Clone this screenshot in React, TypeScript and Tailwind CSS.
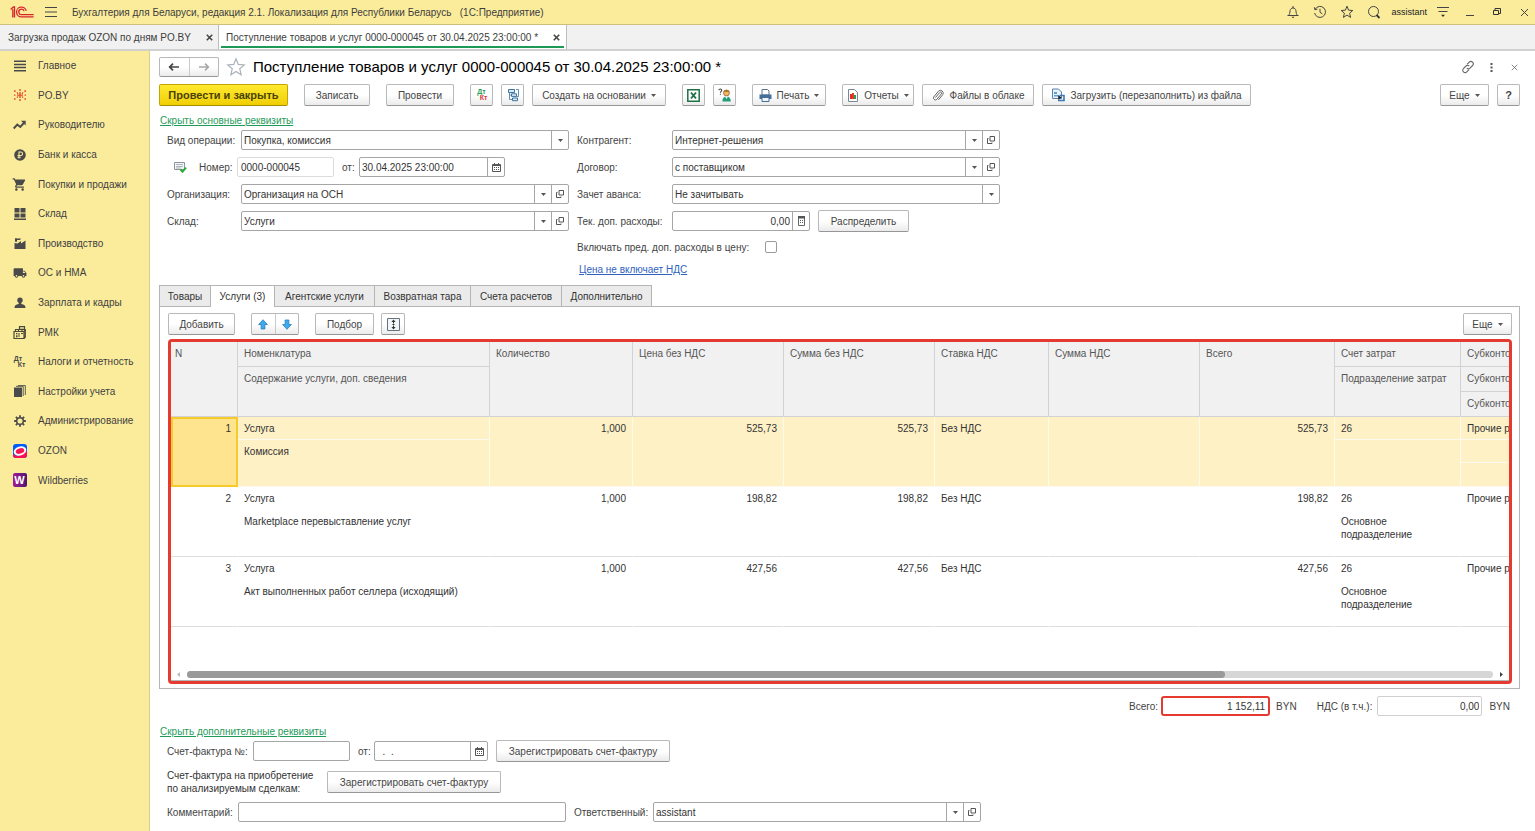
import React from 'react';
import type { ReactNode } from 'react';
import { MdLocalShipping, MdPerson, MdShoppingCart } from 'react-icons/md';

/* ---------- icons ---------- */

const Svg = ({ w = 16, h = 16, box, children, className = '' }: { w?: number; h?: number; box?: string; children: ReactNode; className?: string }) => (
  <svg width={w} height={h} viewBox={box ?? `0 0 ${w} ${h}`} fill="none" aria-hidden="true" className={`shrink-0 ${className}`}>
    {children}
  </svg>
);

const Logo = () => (
  <Svg w={24} h={14}>
    <g stroke="#d8232a" strokeWidth="1.3">
      <path d="M.6 4.4 3.4 2h1.1v10.6M2.8 4.2v8.4" />
      <path d="M16.2 5.8A4.9 4.9 0 1 0 12 11.9h11.6" />
      <path d="M14 6A2.7 2.7 0 1 0 12 9.6h11.6" />
    </g>
  </Svg>
);

const Bars = () => (
  <Svg w={12} h={12}>
    <path d="M0 1.5h12M0 6h12M0 10.5h12" stroke="#444" />
  </Svg>
);

const Bell = () => (
  <Svg w={14} h={14}>
    <path d="M1.500 10.500h11M2.500 10.300C4 9 3.700 7.800 4.100 5.600 4.400 3.800 5.600 3 7 3s2.600.8 2.900 2.600c.4 2.200.1 3.400 1.600 4.700M7 1v2" stroke="#444" />
    <path d="M5.400 11.800h3.200L7 13.200z" fill="#444" />
  </Svg>
);

const History = () => (
  <Svg w={14} h={14}>
    <path d="M2.200 4.200A5.500 5.500 0 1 1 1.600 8M1.300 2.200l.6 2.500 2.500-.5M7 3.800V7.300l2.400 1.600" stroke="#444" />
  </Svg>
);

const Star = ({ size = 14, color = '#444' }: { size?: number; color?: string }) => (
  <Svg w={size} h={size} box="0 0 14 14">
    <path d="M7 1.200 8.600 5.200l4.200.3-3.200 2.700 1 4.200L7 10.100l-3.600 2.300 1-4.200L1.200 5.500l4.200-.3z" stroke={color} strokeWidth={size > 14 ? 0.8 : 1} />
  </Svg>
);

const Search = () => (
  <Svg w={14} h={14}>
    <circle cx="6.500" cy="6.500" r="5" stroke="#444" />
    <path d="m9.500 10 3 3" stroke="#333" strokeWidth="1.800" />
  </Svg>
);

const Filter = () => (
  <Svg w={12} h={12}>
    <path d="M0 1.500h12M1.500 5.500h9" stroke="#444" strokeWidth="1.200" />
    <path d="M4 8.800h4L6 11z" fill="#333" />
  </Svg>
);

const Cross = ({ size = 9, width = 1, color = '#444' }: { size?: number; width?: number; color?: string }) => (
  <Svg w={size} h={size} box="0 0 9 9">
    <path d="m1 1 7 7M8 1 1 8" stroke={color} strokeWidth={width} />
  </Svg>
);

const LinkIcon = () => (
  <Svg w={14} h={14}>
    <g stroke="#666" strokeWidth="1.100">
      <path d="M6 4.400 8.200 2.200a2.300 2.300 0 0 1 3.400 3.300L9 8.100a2.300 2.300 0 0 1-3.200 0" />
      <path d="M8 9.700 5.800 11.900a2.300 2.300 0 0 1-3.400-3.300L5 6a2.300 2.300 0 0 1 3.200 0" />
    </g>
  </Svg>
);

const Caret = () => (
  <Svg w={5} h={3}>
    <path d="M0 0h5L2.500 3z" fill="#555" />
  </Svg>
);

const OpenIcon = () => (
  <Svg w={8} h={8}>
    <path d="M3 .5h4.500V5H3zM1.500 2.500h-1v5H5v-1" stroke="#555" />
  </Svg>
);

const CalendarIcon = () => (
  <Svg w={9} h={9}>
    <path d="M.5 1.500h8v7h-8z" stroke="#555" />
    <path d="M1 1h7v2H1zM2 0h1v2H2zM6 0h1v2H6zM2 4h1v1H2zM4 4h1v1H4zM6 4h1v1H6zM2 6h1v1H2zM4 6h1v1H4zM6 6h1v1H6z" fill="#555" />
  </Svg>
);

const CalcIcon = () => (
  <Svg w={9} h={10}>
    <path d="M1.500.5h6v9h-6z" stroke="#666" />
    <path d="M1 0h7v2.500H1zM3 4h1v1H3zM5 4h1v1H5zM3 6h1v1H3zM5 6h1v1H5z" fill="#555" />
  </Svg>
);

const Arrow = ({ flip = false, color = '#444' }: { flip?: boolean; color?: string }) => (
  <Svg w={12} h={10} className={flip ? 'rotate-180' : ''}>
    <path d="M1 5h10M5 1.700 1.700 5 5 8.300" stroke={color} strokeWidth="1.700" />
  </Svg>
);

const BlueArrow = ({ down = false }: { down?: boolean }) => (
  <Svg w={10} h={11} className={down ? 'rotate-180' : ''}>
    <path d="M5 .7 9.400 5.500H6.900v4.500H3.100V5.500H.6z" fill="#3fa9ee" stroke="#2a7fbd" strokeWidth=".8" />
  </Svg>
);

const StructureIcon = () => (
  <Svg w={14} h={14}>
    <g stroke="#3f739f">
      <path d="M2.500 1.500h6v3h-6zM5.500 5.800h5v2.600h-5zM6.500 10h5v2.700h-5z" fill="#dceaf6" />
      <path d="M3.500 4.500v7h3M3.500 7h2M10 1.500h2.500v7h-2" strokeWidth=".8" />
    </g>
  </Svg>
);

const ExcelIcon = () => (
  <Svg w={13} h={13}>
    <path d="M.8.800h11.400v11.400H.8z" stroke="#1d7145" strokeWidth="1.500" fill="#fff" />
    <path d="m4 3.500 5 6M9 3.500l-5 6" stroke="#1d7145" strokeWidth="1.900" />
  </Svg>
);

const PersonQuestion = () => (
  <Svg w={14} h={14}>
    <circle cx="8.500" cy="5" r="2.900" fill="#f4b76a" stroke="#8f6125" strokeWidth=".8" />
    <path d="M4.400 13.500c0-3.500 1.600-5 4.100-5s4.300 1.500 4.300 5z" fill="#239c77" />
    <path d="m7 8.500 1.500 2.500L10 8.500z" fill="#fff" />
    <path d="M.8 2.200C1 .6 3.800.600 3.700 2.300 3.600 3.400 2.400 3.300 2.400 4.800M2.400 5.800v1" stroke="#444" strokeWidth="1.100" />
    <path d="M5.500 4C6 1.200 10.800 1 11.500 4z" fill="#ad762f" />
  </Svg>
);

const Printer = () => (
  <Svg w={13} h={13}>
    <path d="M3 .500h5.500L10 2v4H3z" fill="#fff" stroke="#5c7288" />
    <path d="M.5 5.500h12V10H.5z" fill="#456f98" />
    <path d="M3 8.500h7v4H3z" fill="#eef4fa" stroke="#456f98" />
  </Svg>
);

const Report = () => (
  <Svg w={12} h={13}>
    <path d="M1.500.5h6l3 3v9h-9z" fill="#fff" stroke="#7c8791" />
    <path d="M3 5h2v5H3z" fill="#e02b2b" />
    <path d="M5 4h2v6H5z" fill="#e23b2e" />
    <path d="M7 6h2v4H7z" fill="#2e9e49" />
  </Svg>
);

const Clip = () => (
  <Svg w={12} h={13}>
    <path d="m3.500 8.500 4.200-5a1 1 0 0 1 1.700 1.300L4.700 10.500a2 2 0 0 1-3-2.500L6.500 2.100a2.800 2.800 0 0 1 4.300 3.500L6.500 10.800" stroke="#666" strokeWidth="1" />
  </Svg>
);

const LoadFile = () => (
  <Svg w={14} h={14}>
    <path d="M1.500 1h6l3 3v6.500h-9z" fill="#eaf3fb" stroke="#5b82a8" />
    <path d="M3 4h3v2H3zM3 7h4v1.500H3z" fill="#58a0d2" />
    <path d="M8.500 7.500h4.500v5H7" stroke="#3c7ab5" strokeWidth="1.600" />
    <path d="m7 7 3.500 2.500L7.500 12z" fill="#222" />
  </Svg>
);

const ExpandIcon = () => (
  <Svg w={13} h={13}>
    <path d="M.5.500h12v12H.5z" fill="#f3f6f8" stroke="#66727c" />
    <path d="M6.500 2v3.500M6.500 7.500V11" stroke="#333" />
    <path d="M6.500 1.500 8.600 4H4.400zM6.500 11.500 8.600 9H4.400zM5.500 6h2v1h-2z" fill="#333" />
  </Svg>
);

const PostedIcon = () => (
  <Svg w={13} h={12}>
    <path d="M.5 1.500h10v7H.5z" fill="#f3f6f9" stroke="#8a94a0" />
    <path d="M2 3.500h7M2 5.500h7M2 7h5" stroke="#9aa5b0" strokeWidth=".8" />
    <path d="m6.500 8.500 2 2.200 3.500-4" stroke="#2faa3c" strokeWidth="2" />
  </Svg>
);

const DtKt = ({ dt, kt }: { dt: string; kt: string }) => (
  <span className="flex flex-col text-[7px] leading-[6px] font-bold" aria-hidden="true">
    <span className={dt}>Дт</span>
    <span className={`pl-1 ${kt}`}>Кт</span>
  </span>
);

const icons: Record<string, ReactNode> = {
  main: (
    <Svg w={12} h={12}>
      <path d="M0 1.200h12M0 4.400h12M0 7.600h12M0 10.800h12" stroke="#4a4a4a" strokeWidth="1.500" />
    </Svg>
  ),
  poby: (
    <Svg w={12} h={12}>
      <g fill="#e4522b">
        <path d="M5.300 0h1.400v2H5.300zM5.300 3h1.400v6H5.300zM5.300 10h1.400v2H5.300zM0 1.300h1.600v1.600H0zM2.500 3.500l1-.4 1 1.300-1 .8zM0 5.400h1.500v1.300H0zM3 5.400h6v1.300H3zM10.500 5.400H12v1.300h-1.500zM10.400 1.300H12v1.600h-1.600zM7.500 4.400l1-1.300 1 .4-1 1.700zM0 9.200h1.600v1.500H0zM2.500 8.500l1-1.600 1 .8-1 1.200zM10.400 9.200H12v1.500h-1.600zM7.500 7.700l1-.8 1 1.600-1 .4z" />
      </g>
    </Svg>
  ),
  lead: (
    <Svg w={13} h={10}>
      <path d="m.7 8.500 3.600-4 3 2.500 4-4.500" stroke="#4a4a4a" strokeWidth="1.900" />
      <path d="M8 .8h4.700v4.700z" fill="#4a4a4a" />
    </Svg>
  ),
  bank: (
    <Svg w={12} h={12}>
      <circle cx="6" cy="6" r="5.800" fill="#4a4a4a" />
      <path d="M5 9.600V3h1.800a1.700 1.700 0 0 1 0 3.500H3.500M3.500 8.200h3.300" stroke="#fbec9c" strokeWidth="1.100" />
    </Svg>
  ),
  buy: <MdShoppingCart size={15} />,
  stock: (
    <Svg w={12} h={12}>
      <path d="M.5 0h5v4.500h-5zM6.500 0h5v4.500h-5zM.5 5.500h5v4h-5zM6.500 5.500h5v4h-5zM0 10.500h12V12H0z" fill="#4a4a4a" />
    </Svg>
  ),
  factory: (
    <Svg w={12} h={12}>
      <path d="M.5 12V6l3 .5L7 4v2.500L11.500 3.500V12z" fill="#4a4a4a" />
      <path d="M1 1.200h2v3.500H1zM3 2c1-2 2 .5 3.500-1v1.500C5 4 4 2 3 3.500z" fill="#4a4a4a" />
    </Svg>
  ),
  assets: <MdLocalShipping size={14} />,
  staff: (
    <Svg w={12} h={12}>
      <circle cx="6" cy="3.200" r="2.700" fill="#4a4a4a" />
      <path d="M4.700 5h2.600v2c3 .3 4.200 1.500 4.200 4H.5c0-2.500 1.200-3.700 4.200-4z" fill="#4a4a4a" />
    </Svg>
  ),
  rmk: (
    <Svg w={13} h={13}>
      <path d="M1 5.500h10v7H1zM2.500 5.500v-2h3v2M6.500.7h5v2.600h-5zM9 3.500v2M11 5.500 12.300 3v8L11 12.500" stroke="#4a4a3a" strokeWidth="1.200" />
      <path d="M3 7h1.500v1.200H3zM3 9.200h1.500v2H3zM5.500 7h1v4h-1zM8 7h2v1H8z" fill="#4a4a3a" />
    </Svg>
  ),
  tax: <DtKt dt="text-[#4a4a4a]" kt="text-[#4a4a4a]" />,
  setup: (
    <Svg w={12} h={12}>
      <path d="M0 2.500h8V12H0z" fill="#4a4a4a" />
      <path d="M2 1.300h7.200V11M4 .4h7.300V10" stroke="#4a4a4a" strokeWidth=".9" />
    </Svg>
  ),
  admin: (
    <Svg w={12} h={12}>
      <circle cx="6" cy="6" r="3.300" stroke="#4a4a4a" strokeWidth="1.500" />
      <path d="M6 .2v2M6 9.800v2M.2 6h2M9.800 6h2M1.900 1.900l1.400 1.400M8.700 8.700l1.400 1.400M1.900 10.100l1.400-1.400M8.700 3.300l1.400-1.400" stroke="#4a4a4a" strokeWidth="1.800" />
    </Svg>
  ),
  ozon: (
    <Svg w={14} h={14}>
      <rect width="14" height="14" rx="3" fill="#005bff" />
      <path d="M0 9.500C3 14 9 11 14 7v4a3 3 0 0 1-3 3H3a3 3 0 0 1-3-3z" fill="#f91155" />
      <ellipse cx="7" cy="7" rx="5.400" ry="3.600" transform="rotate(-18 7 7)" fill="#f91155" stroke="#fff" strokeWidth="2" />
    </Svg>
  ),
  wb: (
    <span className="flex size-3.5 items-center justify-center rounded-[2px] bg-linear-to-r from-[#a8149b] to-[#4a1570] text-[11px] leading-none font-bold text-white" aria-hidden="true">
      W
    </span>
  ),
};

/* ---------- controls ---------- */

const Btn = ({ children, className = '', label, primary = false }: { children: ReactNode; className?: string; label?: string; primary?: boolean }) => (
  <button
    type="button"
    aria-label={label}
    className={`flex h-[22px] shrink-0 items-center justify-center rounded-[2px] border whitespace-nowrap ${
      primary
        ? 'border-[#c3a600] border-b-[#a58c00] bg-linear-to-b from-[#ffe92e] to-[#f0cf00] text-[11px] font-bold text-[#4a4300]'
        : 'border-[#b9b9b9] border-b-[#969696] bg-linear-to-b from-white from-50% to-[#ebebeb] text-[#444]'
    } ${className}`}
  >
    {children}
  </button>
);

const boxCls = 'flex h-5 shrink-0 overflow-hidden rounded-[2px] border border-[#a6a6a6] bg-white text-[#333]';
const sideCls = 'flex w-[17px] shrink-0 items-center justify-center border-l border-[#a6a6a6]';

const Combo = ({ id, value, width, open = false }: { id: string; value: string; width: string; open?: boolean }) => (
  <div className={`${boxCls} ${width}`}>
    <div className="grid min-w-0 flex-1">
      <select id={id} className="col-start-1 row-start-1 w-full appearance-none bg-transparent pr-5 pl-[2px] outline-none" defaultValue={value}>
        <option>{value}</option>
      </select>
      <span className={`pointer-events-none col-start-1 row-start-1 justify-self-end ${sideCls}`}>
        <Caret />
      </span>
    </div>
    {open && (
      <button type="button" aria-label="Открыть" className={sideCls}>
        <OpenIcon />
      </button>
    )}
  </div>
);

const Field = ({ id, value = '', width, right = false, label, icon }: { id: string; value?: string; width: string; right?: boolean; label?: string; icon?: ReactNode }) => (
  <div className={`${boxCls} ${width}`}>
    <input id={id} defaultValue={value} className={`min-w-0 flex-1 px-[2px] whitespace-pre outline-none ${right ? 'text-right' : ''}`} />
    {icon && (
      <button type="button" aria-label={label} className={sideCls}>
        {icon}
      </button>
    )}
  </div>
);

const Row = ({ id, label, children }: { id: string; label: string; children: ReactNode }) => (
  <div className="flex h-5 items-center">
    <label htmlFor={id} className="w-[95px] shrink-0 whitespace-nowrap">
      {label}
    </label>
    {children}
  </div>
);

/* ---------- data ---------- */

const menu = [
  ['main', 'Главное'],
  ['poby', 'PO.BY'],
  ['lead', 'Руководителю'],
  ['bank', 'Банк и касса'],
  ['buy', 'Покупки и продажи'],
  ['stock', 'Склад'],
  ['factory', 'Производство'],
  ['assets', 'ОС и НМА'],
  ['staff', 'Зарплата и кадры'],
  ['rmk', 'РМК'],
  ['tax', 'Налоги и отчетность'],
  ['setup', 'Настройки учета'],
  ['admin', 'Администрирование'],
  ['ozon', 'OZON'],
  ['wb', 'Wildberries'],
];

const tabs = [
  { text: 'Товары', width: 'w-[52px]' },
  { text: 'Услуги (3)', width: 'w-16' },
  { text: 'Агентские услуги', width: 'w-[100px]' },
  { text: 'Возвратная тара', width: 'w-24' },
  { text: 'Счета расчетов', width: 'w-[91px]' },
  { text: 'Дополнительно', width: 'w-[90px]' },
];

const services = [
  { n: 1, text: 'Комиссия', sum: '525,73', dept: '' },
  { n: 2, text: 'Marketplace перевыставление услуг', sum: '198,82', dept: 'Основное подразделение' },
  { n: 3, text: 'Акт выполненных работ селлера (исходящий)', sum: '427,56', dept: 'Основное подразделение' },
];

const th = 'border-r border-b border-[#d2d2d2] px-[6px] pt-[5px] text-left align-top font-normal whitespace-nowrap';

const Services = () => (
  <table className="w-[1684px] table-fixed border-separate border-spacing-0 leading-[13px] text-[#333]">
    <colgroup>
      <col className="w-[67px]" />
      <col className="w-[252px]" />
      <col className="w-[143px]" />
      <col className="w-[151px]" />
      <col className="w-[151px]" />
      <col className="w-[114px]" />
      <col className="w-[151px]" />
      <col className="w-[135px]" />
      <col className="w-[126px]" />
      <col />
    </colgroup>
    <thead className="bg-[#f1f1f1] text-[#555]">
      <tr className="h-[25px]">
        <th rowSpan={3} className={`${th} pl-[4px]`}>N</th>
        <th className={th}>Номенклатура</th>
        <th rowSpan={3} className={th}>Количество</th>
        <th rowSpan={3} className={th}>Цена без НДС</th>
        <th rowSpan={3} className={th}>Сумма без НДС</th>
        <th rowSpan={3} className={th}>Ставка НДС</th>
        <th rowSpan={3} className={th}>Сумма НДС</th>
        <th rowSpan={3} className={th}>Всего</th>
        <th className={th}>Счет затрат</th>
        <th className={th}>Субконто</th>
      </tr>
      <tr className="h-[25px]">
        <th rowSpan={2} className={th}>Содержание услуги, доп. сведения</th>
        <th rowSpan={2} className={th}>Подразделение затрат</th>
        <th className={th}>Субконто</th>
      </tr>
      <tr className="h-[25px]">
        <th className={th}>Субконто</th>
      </tr>
    </thead>
    {services.map((s) => {
      const active = s.n === 1;
      const inner = `px-[6px] pt-[5px] align-top ${active ? 'border-r border-b border-[#fffaf0] bg-[#fef1c6]' : 'border-r border-transparent'}`;
      const last = `${inner} ${active ? '' : 'border-b border-b-[#dedede]'}`;
      const num = `${last} text-right`;
      return (
        <tbody key={s.n}>
          <tr className="h-[23px]">
            <td
              rowSpan={3}
              className={active ? 'border-2 border-[#f7ca2e] bg-[#ffe48f] px-[5px] pt-[3px] text-right align-top' : num}
            >
              {s.n}
            </td>
            <td className={inner}>Услуга</td>
            <td rowSpan={3} className={num}>1,000</td>
            <td rowSpan={3} className={num}>{s.sum}</td>
            <td rowSpan={3} className={num}>{s.sum}</td>
            <td rowSpan={3} className={last}>Без НДС</td>
            <td rowSpan={3} className={last} />
            <td rowSpan={3} className={num}>{s.sum}</td>
            <td className={inner}>26</td>
            <td className={inner}>Прочие расходы</td>
          </tr>
          <tr className="h-[23px]">
            <td rowSpan={2} className={last}>{s.text}</td>
            <td rowSpan={2} className={last}>{s.dept}</td>
            <td className={inner} />
          </tr>
          <tr className="h-[24px]">
            <td className={last} />
          </tr>
        </tbody>
      );
    })}
  </table>
);

/* ---------- page ---------- */

export default function App() {
  return (
    <div className="flex min-h-screen flex-col bg-white font-['Liberation_Sans',Arial,sans-serif] text-[10px] leading-[13px] text-[#444]">
      <header className="flex h-[25px] shrink-0 items-center border-b border-[#cdbf80] bg-[#fbec9c] pr-[6px] pl-[10px] text-[#3d3d3d]">
        <Logo />
        <button type="button" aria-label="Меню" className="ml-[11px]">
          <Bars />
        </button>
        <span className="ml-[15px] whitespace-pre">Бухгалтерия для Беларуси, редакция 2.1. Локализация для Республики Беларусь   (1С:Предприятие)</span>
        <div className="ml-auto flex items-center gap-[13px]">
          <button type="button" aria-label="Уведомления"><Bell /></button>
          <button type="button" aria-label="История"><History /></button>
          <button type="button" aria-label="Избранное"><Star /></button>
          <button type="button" aria-label="Поиск"><Search /></button>
          <span className="-mx-[3px] text-[9px] text-[#222]">assistant</span>
          <button type="button" aria-label="Настройки"><Filter /></button>
        </div>
        <div className="ml-[17px] flex items-center gap-[19px]">
          <button type="button" aria-label="Свернуть">
            <Svg w={8} h={9}><path d="M0 7.500h8" stroke="#444" /></Svg>
          </button>
          <button type="button" aria-label="Восстановить">
            <Svg w={8} h={8}><path d="M.5 2.500h5v4h-5zM2 2V.5h5.500v5H6" stroke="#333" /></Svg>
          </button>
          <button type="button" aria-label="Закрыть"><Cross /></button>
        </div>
      </header>

      <div className="flex h-[26px] shrink-0 border-b-2 border-[#d0d0d0] bg-[#f1f1f1] text-[#3d3d3d]">
        <div className="flex w-[219px] items-center justify-between border-r border-[#bdbdbd] pr-[5px] pl-2 whitespace-nowrap">
          <span>Загрузка продаж OZON по дням PO.BY</span>
          <button type="button" aria-label="Закрыть вкладку"><Cross size={7} width={2} /></button>
        </div>
        <div className="flex w-[348px] border-r border-[#bdbdbd] bg-white px-[2px] pb-px">
          <div className="flex flex-1 items-center justify-between border-b-2 border-[#1d9a55] px-[5px] pt-[3px] pr-[4px] whitespace-nowrap">
            <span>Поступление товаров и услуг 0000-000045 от 30.04.2025 23:00:00 *</span>
            <button type="button" aria-label="Закрыть вкладку"><Cross size={7} width={2} /></button>
          </div>
        </div>
      </div>

      <div className="flex min-w-0 flex-1">
        <aside className="w-[150px] shrink-0 border-r border-[#d8cd90] bg-[#fbec9c]">
          <nav className="flex h-[444px] flex-col">
            {menu.map(([key, text]) => (
              <a key={key} href={`#${key}`} className="flex flex-1 items-center whitespace-nowrap text-[#3f3f3f]">
                <span className="flex w-10 shrink-0 justify-center pr-px text-[#4a4a4a]">{icons[key]}</span>
                <span className="-ml-[2px]">{text}</span>
              </a>
            ))}
          </nav>
        </aside>

        <main className="min-w-0 flex-1 pt-[6px] pr-[15px] pl-[9px]">
          <div className="flex h-5 items-center">
            <div className="flex h-5 w-[60px] rounded-[2px] border border-[#b9b9b9] border-b-[#969696] bg-linear-to-b from-white from-50% to-[#ebebeb]">
              <button type="button" aria-label="Назад" className="flex flex-1 items-center justify-center border-r border-[#c9c9c9]"><Arrow /></button>
              <button type="button" aria-label="Вперед" className="flex flex-1 items-center justify-center"><Arrow flip color="#a8a8a8" /></button>
            </div>
            <button type="button" aria-label="В избранное" className="ml-[7px]"><Star size={20} color="#a9b1ba" /></button>
            <h1 className="ml-[7px] text-[15px] leading-5 whitespace-nowrap text-black">Поступление товаров и услуг 0000-000045 от 30.04.2025 23:00:00 *</h1>
            <div className="ml-auto flex items-center gap-[15px] pr-[2px]">
              <button type="button" aria-label="Ссылка"><LinkIcon /></button>
              <button type="button" aria-label="Дополнительно">
                <Svg w={3} h={9}><path d="M.5 0h2v2h-2zM.5 3.500h2v2h-2zM.5 7h2v2h-2z" fill="#555" /></Svg>
              </button>
              <button type="button" aria-label="Закрыть" className="ml-[3px]"><Cross size={7} color="#666" /></button>
            </div>
          </div>

          <div className="mt-[7px] flex items-center gap-2">
            <Btn primary className="mr-2 w-[129px]">Провести и закрыть</Btn>
            <Btn className="mr-2 w-[66px]">Записать</Btn>
            <Btn className="mr-2 w-[68px]">Провести</Btn>
            <Btn className="w-[23px]" label="Дт Кт"><DtKt dt="text-[#27a15b]" kt="text-[#dd3b3b]" /></Btn>
            <Btn className="w-[23px]" label="Структура подчиненности"><StructureIcon /></Btn>
            <Btn className="mr-2 w-[134px] gap-[5px]">Создать на основании <Caret /></Btn>
            <Btn className="w-[23px]" label="Excel"><ExcelIcon /></Btn>
            <Btn className="mr-2 w-[23px]" label="Помощь"><PersonQuestion /></Btn>
            <Btn className="mr-2 w-[74px] gap-[5px]"><Printer />Печать <Caret /></Btn>
            <Btn className="w-[72px] gap-[5px]"><Report />Отчеты <Caret /></Btn>
            <Btn className="w-[112px] gap-[6px]"><Clip />Файлы в облаке</Btn>
            <Btn className="w-[209px] gap-[5px]"><LoadFile />Загрузить (перезаполнить) из файла</Btn>
            <Btn className="ml-auto w-[49px] gap-[5px]">Еще <Caret /></Btn>
            <Btn className="w-[23px] text-[11px] font-bold" label="Справка">?</Btn>
          </div>

          <div className="mt-2 flex pl-px">
            <a href="#main-details" className="text-[#1f9c5a] underline">Скрыть основные реквизиты</a>
          </div>

          <div className="mt-[3px] flex items-start gap-2 pl-2">
            <div className="flex w-[402px] shrink-0 flex-col gap-[7px]">
              <div className="flex h-5 items-center">
                <label htmlFor="operation" className="w-[74px] shrink-0 whitespace-nowrap">Вид операции:</label>
                <Combo id="operation" value="Покупка, комиссия" width="w-[328px]" />
              </div>
              <div className="flex h-5 items-center pl-[7px]">
                <PostedIcon />
                <label htmlFor="number" className="ml-3 w-[38px]">Номер:</label>
                <input id="number" defaultValue="0000-000045" className="h-5 w-[97px] rounded-[2px] border border-[#dcdcdc] px-[3px] text-[#333] outline-none" />
                <label htmlFor="date" className="ml-2 w-[17px]">от:</label>
                <Field id="date" value="30.04.2025 23:00:00" width="w-[146px]" icon={<CalendarIcon />} label="Календарь" />
              </div>
              <div className="flex h-5 items-center">
                <label htmlFor="org" className="w-[74px] shrink-0">Организация:</label>
                <Combo id="org" value="Организация на ОСН" width="w-[328px]" open />
              </div>
              <div className="flex h-5 items-center">
                <label htmlFor="stock" className="w-[74px] shrink-0">Склад:</label>
                <Combo id="stock" value="Услуги" width="w-[328px]" open />
              </div>
            </div>

            <div className="flex flex-col gap-[7px]">
              <Row id="partner" label="Контрагент:"><Combo id="partner" value="Интернет-решения" width="w-[328px]" open /></Row>
              <Row id="contract" label="Договор:"><Combo id="contract" value="с поставщиком" width="w-[328px]" open /></Row>
              <Row id="advance" label="Зачет аванса:"><Combo id="advance" value="Не зачитывать" width="w-[328px]" /></Row>
              <Row id="extra" label="Тек. доп. расходы:">
                <Field id="extra" value="0,00" width="w-[138px]" right icon={<CalcIcon />} label="Калькулятор" />
                <Btn className="ml-2 w-[91px]">Распределить</Btn>
              </Row>
              <div className="flex h-[18px] items-center gap-[6px]">
                <label htmlFor="include" className="w-[182px]">Включать пред. доп. расходы в цену:</label>
                <input id="include" type="checkbox" className="size-3 appearance-none rounded-[2px] border border-[#9a9a9a] bg-white" />
              </div>
              <a href="#price" className="self-start pl-[2px] text-[#2f62c0] underline">Цена не включает НДС</a>
            </div>
          </div>

          <div className="mt-[9px] flex" role="tablist">
            {tabs.map((t, i) => (
              <button
                key={t.text}
                type="button"
                role="tab"
                aria-selected={i === 1}
                className={`h-[22px] border-t border-r border-[#b5b5b5] text-[#333] first:border-l ${t.width} ${i === 1 ? 'bg-white' : 'border-b bg-[#ebebeb]'}`}
              >
                {t.text}
              </button>
            ))}
            <div className="flex-1 border-b border-[#b5b5b5]" />
          </div>

          <section className="border-x border-b border-[#b5b5b5] pt-[6px] pr-[7px] pb-1 pl-2">
            <div className="flex items-center">
              <Btn className="w-[67px]">Добавить</Btn>
              <div className="ml-4 flex h-[22px] w-12 rounded-[2px] border border-[#b9b9b9] border-b-[#969696] bg-linear-to-b from-white from-50% to-[#ebebeb]">
                <button type="button" aria-label="Вверх" className="flex flex-1 items-center justify-center border-r border-[#c9c9c9]"><BlueArrow /></button>
                <button type="button" aria-label="Вниз" className="flex flex-1 items-center justify-center"><BlueArrow down /></button>
              </div>
              <Btn className="ml-4 w-[59px]">Подбор</Btn>
              <Btn className="ml-[7px] w-6" label="Развернуть"><ExpandIcon /></Btn>
              <Btn className="ml-auto w-[49px] gap-[5px]">Еще <Caret /></Btn>
            </div>

            <div className="mt-1 flex min-h-[345px] flex-col rounded-[4px] border-[3px] border-[#e53a30]">
              <div className="flex-1 overflow-hidden">
                <Services />
              </div>
              <div className="flex items-center gap-[7px] px-[6px] pb-[2px]">
                <Svg w={3} h={5}><path d="M3 0v5L0 2.500z" fill="#bbb" /></Svg>
                <div className="h-[7px] flex-1 rounded-full bg-[#d6d6d6]">
                  <div className="h-full w-[79.5%] rounded-full bg-[#999]" />
                </div>
                <Svg w={3} h={5}><path d="M0 0v5l3-2.500z" fill="#444" /></Svg>
              </div>
              <div className="border-b border-[#b5b5b5]" />
            </div>
          </section>

          <div className="mt-[7px] flex items-center justify-end pr-[10px]">
            <label htmlFor="total" className="mr-[3px]">Всего:</label>
            <input id="total" defaultValue="1 152,11" className="h-5 w-[109px] rounded-[3px] border-2 border-[#e53a30] px-[3px] text-right text-[#333] outline-none" />
            <span className="mr-5 ml-[6px]">BYN</span>
            <label htmlFor="vat" className="mr-[5px]">НДС (в т.ч.):</label>
            <input id="vat" defaultValue="0,00" className="h-5 w-[105px] rounded-[2px] border border-[#d0d0d0] px-[2px] text-right text-[#333] outline-none" />
            <span className="ml-[7px]">BYN</span>
          </div>

          <div className="mt-[9px] flex pl-px">
            <a href="#more-details" className="text-[#1f9c5a] underline">Скрыть дополнительные реквизиты</a>
          </div>

          <div className="mt-[3px] flex h-5 items-center pl-2 whitespace-nowrap">
            <label htmlFor="invoice" className="w-[86px]">Счет-фактура №:</label>
            <Field id="invoice" width="w-[97px]" />
            <label htmlFor="invoice-date" className="ml-2 w-4">от:</label>
            <Field id="invoice-date" value="  .  ." width="w-[114px]" icon={<CalendarIcon />} label="Календарь" />
            <Btn className="ml-2 w-[174px]">Зарегистрировать счет-фактуру</Btn>
          </div>

          <div className="mt-2 flex items-center pl-2 whitespace-nowrap text-[#333]">
            <span className="w-40">Счет-фактура на приобретение<br />по анализируемым сделкам:</span>
            <Btn className="w-[174px]">Зарегистрировать счет-фактуру</Btn>
          </div>

          <div className="mt-[7px] mb-1 flex h-5 items-center pl-2 whitespace-nowrap">
            <label htmlFor="comment" className="w-[71px]">Комментарий:</label>
            <Field id="comment" width="w-[328px]" />
            <label htmlFor="owner" className="ml-2 w-[79px]">Ответственный:</label>
            <Combo id="owner" value="assistant" width="w-[328px]" open />
          </div>
        </main>
      </div>
    </div>
  );
}
